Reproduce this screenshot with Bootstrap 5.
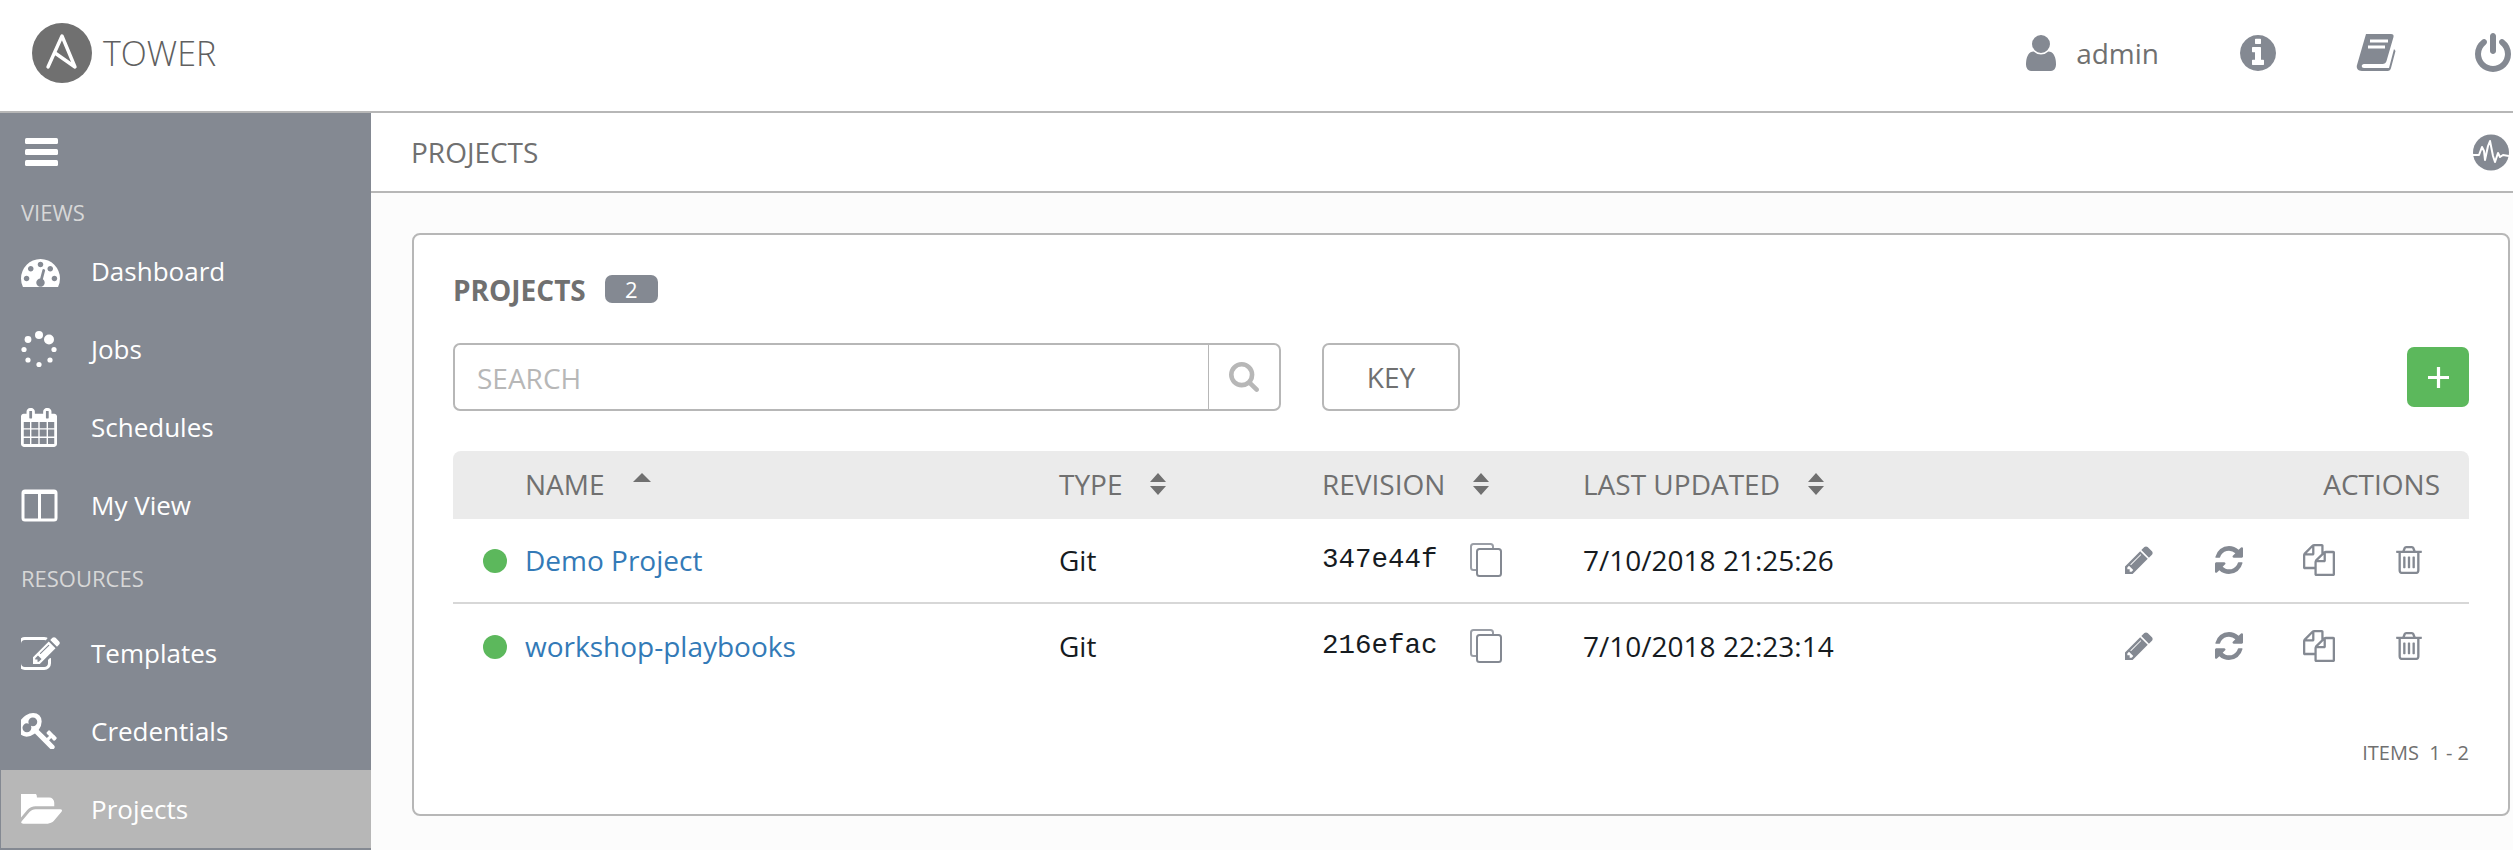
<!DOCTYPE html>
<html lang="en">
<head>
    <meta charset="UTF-8">
    <title>Projects | Tower</title>
    <link rel="stylesheet" href="https://cdn.jsdelivr.net/npm/bootstrap@5.3.0/dist/css/bootstrap.min.css">
    <style>
        html, body { height: 850px; overflow: hidden; }
        body { font-family: "Open Sans", "Liberation Sans", sans-serif; background: #fcfcfc; color: #707070; min-width: 2513px; }
        svg { display: block; flex: none; }
        .icon-sprite { position: absolute; width: 0; height: 0; }

        .top-bar { height: 113px; background: #fff; border-bottom: 2px solid #b7b7b7; padding: 0 2px 6px 32px; flex-wrap: nowrap; }
        .brand-name { font-size: 34px; font-weight: 300; color: #606060; margin-left: 11px; line-height: 1; }
        .user-name { font-size: 28px; color: #707070; margin-left: 20px; margin-right: 81px; line-height: 1; }
        .info-icon { margin-right: 80px; }
        .book-icon { margin-right: 79px; }
        .gray-icon { fill: #848992; }

        .page-body { height: 737px; }
        .side-nav { width: 371px; flex: none; background: #848992; color: #fff; }
        .side-toggle { height: 78px; padding-left: 25px; }
        .side-label { font-size: 22px; color: #d7d7d7; padding-left: 21px; line-height: 41px; height: 41px; padding-top: 1px; }
        .side-label-gap { height: 70px; padding-top: 14px; }
        .side-link { height: 78px; font-size: 26px; font-weight: 500; color: #fff; text-decoration: none; padding-left: 21px; }
        .side-link:hover { color: #fff; }
        .side-link.is-active { background: #b7b7b7; margin-left: 1px; padding-left: 20px; }
        .side-icon { width: 70px; flex: none; fill: #fff; }

        .main-area { min-width: 0; flex: 1 1 auto; }
        .sub-bar { height: 80px; background: #fff; border-bottom: 2px solid #b7b7b7; padding: 0 4px 0 40px; font-size: 28px; }
        .content-area { padding: 40px 3px 0 41px; }
        .proj-card { height: 583px; border: 2px solid #b7b7b7; border-radius: 8px; background: #fff; padding: 40px 39px 0; color: #707070; }
        .proj-title { height: 28px; }
        .proj-title h2 { font-size: 28px; font-weight: 700; color: #707070; margin: 0; line-height: 1; padding-top: 2px; }
        .count-pill { background: #848992; color: #fff; font-size: 22px; font-weight: 500; width: 53px; height: 28px; border-radius: 7px; margin-left: 19px; padding: 0; line-height: 28px; }

        .tool-row { margin-top: 40px; height: 68px; }
        .search-box { width: 828px; height: 68px; flex-wrap: nowrap; }
        .search-box .form-control { border: 2px solid #b7b7b7; border-right: 0; border-radius: 7px 0 0 7px; font-size: 28px; padding: 2px 22px 0; color: #707070; box-shadow: none; }
        .search-box .form-control::placeholder { color: #b7b7b7; opacity: 1; }
        .search-box .input-group-text { width: 73px; background: #fff; justify-content: center; border: 2px solid #b7b7b7; border-left: 1px solid #b7b7b7; border-radius: 0 7px 7px 0; padding: 0; margin-left: 0 !important; fill: #b7b7b7; }
        .key-btn { width: 138px; height: 68px; margin-left: 41px; border: 2px solid #b7b7b7; border-radius: 7px; background: #fff; color: #707070; font-size: 28px; padding: 0; }
        .add-btn { width: 62px; height: 60px; margin-top: 4px; background: #5cb85c; border: 0; border-radius: 7px; padding: 0; }

        .proj-table { margin: 40px 0 0; table-layout: fixed; width: 2016px; font-size: 28px; }
        .proj-table th, .proj-table td { padding: 0 0 2px; border: 0; vertical-align: middle; background: transparent; box-shadow: none; }
        .proj-table thead th { height: 68px; background: #ebebeb; color: #707070; font-size: 28px; font-weight: 400; }
        .proj-table thead th:first-child { border-top-left-radius: 8px; }
        .proj-table thead th:last-child { border-top-right-radius: 8px; text-align: right; padding-right: 29px; }
        .proj-table tbody td { height: 84px; color: #161b1f; }
        .proj-table tbody tr + tr td { border-top: 2px solid #d7d7d7; height: 86px; }
        .proj-table a { color: #337ab7; text-decoration: none; }
        .col-status { width: 72px; }
        .col-name { width: 534px; }
        .col-type { width: 263px; }
        .col-rev { width: 261px; }
        .col-updated { width: 520px; }
        .status-dot { width: 24px; height: 24px; border-radius: 50%; background: #5cb85c; margin: 2px 0 0 30px; }
        .rev-code { font-family: "Liberation Mono", monospace; font-size: 27.500px; width: 148px; }
        .row-actions { padding-left: 22px; fill: #848992; }
        .gap-refresh { margin-left: 62px; }
        .gap-copy { margin-left: 60px; }
        .gap-trash { margin-left: 61px; }
        .sort-mark { margin-left: 28px; fill: #707070; }
        .sort-up { margin-bottom: 14px; }
        .items-note { font-size: 20px; color: #707070; margin: 52px 0 0; text-align: right; line-height: 1.2; }
    </style>
</head>
<body>
    <svg class="icon-sprite" aria-hidden="true">
        <symbol id="i-edit" viewBox="128 128 1536 1536"><path d="M491 1536l91-91-235-235-91 91v107h128v128h107zm523-928q0-22-22-22-10 0-17 7l-542 542q-7 7-7 17 0 22 22 22 10 0 17-7l542-542q7-7 7-17zm-54-192l416 416-832 832h-416v-416zm683 96q0 53-37 90l-166 166-416-416 166-165q36-38 90-38 53 0 91 38l235 234q37 39 37 91z"/></symbol>
        <symbol id="i-refresh" viewBox="128 128 1536 1536"><path d="M1639 1056q0 5-1 7-64 268-268 434.500t-478 166.500q-146 0-282.500-55t-243.500-157l-129 129q-19 19-45 19t-45-19-19-45v-448q0-26 19-45t45-19h448q26 0 45 19t19 45-19 45l-137 137q71 66 161 102t187 36q134 0 250-65t186-179q11-17 53-117 8-23 30-23h192q13 0 22.500 9.500t9.500 22.500zm25-800v448q0 26-19 45t-45 19h-448q-26 0-45-19t-19-45 19-45l138-138q-148-137-349-137-134 0-250 65t-186 179q-11 17-53 117-8 23-30 23h-199q-13 0-22.500-9.500t-9.500-22.500v-7q65-268 270-434.500t480-166.500q146 0 284 55.500t245 156.500l130-129q19-19 45-19t45 19 19 45z"/></symbol>
        <symbol id="i-files" viewBox="0 0 1792 1792"><path d="M1696 384q40 0 68 28t28 68v1216q0 40-28 68t-68 28h-960q-40 0-68-28t-28-68v-288h-544q-40 0-68-28t-28-68v-672q0-40 20-88t48-76l408-408q28-28 76-48t88-20h416q40 0 68 28t28 68v328q68-40 128-40h416zm-544 213l-299 299h299v-299zm-640-384l-299 299h299v-299zm196 647l316-316v-416h-384v416q0 40-28 68t-68 28h-416v640h512v-256q0-40 20-88t48-76zm956 804v-1152h-384v416q0 40-28 68t-68 28h-416v640h896z"/></symbol>
        <symbol id="i-trash" viewBox="192 128 1408 1536"><path d="M704 736v576q0 14-9 23t-23 9h-64q-14 0-23-9t-9-23v-576q0-14 9-23t23-9h64q14 0 23 9t9 23zm256 0v576q0 14-9 23t-23 9h-64q-14 0-23-9t-9-23v-576q0-14 9-23t23-9h64q14 0 23 9t9 23zm256 0v576q0 14-9 23t-23 9h-64q-14 0-23-9t-9-23v-576q0-14 9-23t23-9h64q14 0 23 9t9 23zm128 724v-948h-896v948q0 22 7 40.500t14.500 27 10.500 8.500h832q3 0 10.500-8.500t14.500-27 7-40.500zm-672-1076h448l-48-117q-7-9-17-11h-317q-10 2-17 11zm928 32v64q0 14-9 23t-23 9h-96v948q0 83-47 143.500t-113 60.500h-832q-66 0-113-58.500t-47-141.500v-952h-96q-14 0-23-9t-9-23v-64q0-14 9-23t23-9h309l70-167q15-37 54-63t79-26h320q40 0 79 26t54 63l70 167h309q14 0 23 9t9 23z"/></symbol>
        <symbol id="i-clip" viewBox="0 0 32 34"><path d="M7 27H3.500C2 27 1 26 1 24.500V3.500C1 2 2 1 3.500 1h17C22 1 23 2 23 3.500V6" fill="none" stroke="#9a9ea6" stroke-width="2"/><rect x="7" y="6" width="24" height="27" rx="2.500" fill="none" stroke="#848992" stroke-width="2"/></symbol>
        <symbol id="i-sort" viewBox="0 0 16 22"><path d="M8 0l8 9H0zM8 22l-8-9h16z"/></symbol>
    </svg>

    <nav class="navbar top-bar d-flex justify-content-between align-items-center">
        <div class="d-flex align-items-center">
            <svg width="60" height="60" viewBox="0 0 60 60"><circle cx="30" cy="30" r="30" fill="#707070"/><path d="M16 44 30 13l13 31-20-14" fill="none" stroke="#fff" stroke-width="3.400" stroke-linejoin="round" stroke-linecap="round"/></svg>
            <span class="brand-name">TOWER</span>
        </div>
        <div class="d-flex align-items-center gray-icon">
            <svg width="30" height="36" viewBox="256 128 1280 1536"><path d="M1536 1399q0 109-62.500 187t-150.500 78h-854q-88 0-150.500-78t-62.500-187q0-85 8.500-160.500t31.500-152 58.500-131 94-89 134.500-34.500q131 128 313 128t313-128q76 0 134.500 34.500t94 89 58.500 131 31.500 152 8.500 160.500zm-256-887q0 159-112.500 271.500t-271.500 112.500-271.500-112.500-112.500-271.500 112.500-271.500 271.500-112.500 271.500 112.500 112.500 271.500z"/></svg>
            <span class="user-name">admin</span>
            <svg class="info-icon" width="36" height="36" viewBox="128 128 1536 1536"><path d="M1152 1376v-160q0-14-9-23t-23-9h-96v-512q0-14-9-23t-23-9h-320q-14 0-23 9t-9 23v160q0 14 9 23t23 9h96v320h-96q-14 0-23 9t-9 23v160q0 14 9 23t23 9h448q14 0 23-9t9-23zm-128-896v-160q0-14-9-23t-23-9h-192q-14 0-23 9t-9 23v160q0 14 9 23t23 9h192q14 0 23-9t9-23zm640 416q0 209-103 385.500t-279.500 279.500-385.500 103-385.500-103-279.500-279.500-103-385.500 103-385.500 279.500-279.500 385.500-103 385.500 103 279.500 279.500 103 385.500z"/></svg>
            <svg class="book-icon" width="40" height="37" viewBox="0 0 40 37"><path d="M10 0h25c2 0 3 1 2.500 3l-7 24c-.5 2-2 3-4 3H8c-3 0-3 4 0 4h25l5-19 1.500 2L35 34c-.5 2-1.500 3-3.500 3H6c-4 0-6-3-5-6z"/><path d="M14 7h18M12 13h17" stroke="#fff" stroke-width="3"/></svg>
            <svg width="36" height="39" viewBox="128 0 1536 1664"><path d="M1664 896q0 156-61 298t-164 245-245 164-298 61-298-61-245-164-164-245-61-298q0-182 80.500-343t226.500-270q43-32 95.500-25t83.500 50q32 42 24.500 94.500t-49.500 84.500q-98 74-151.500 181t-53.500 228q0 104 40.500 198.500t109.500 163.500 163.500 109.500 198.500 40.500 198.500-40.500 163.500-109.500 109.500-163.500 40.500-198.500q0-121-53.500-228t-151.500-181q-42-32-49.500-84.500t24.500-94.500q31-43 84-50t95 25q146 109 226.500 270t80.500 343zm-640-768v640q0 52-38 90t-90 38-90-38-38-90v-640q0-52 38-90t90-38 90 38 38 90z"/></svg>
        </div>
    </nav>

    <div class="d-flex page-body">
        <aside class="side-nav d-flex flex-column">
            <div class="side-toggle d-flex align-items-center">
                <svg width="33" height="28" viewBox="0 0 33 28"><rect width="33" height="6" rx="1.500" fill="#fff"/><rect y="11" width="33" height="6" rx="1.500" fill="#fff"/><rect y="22" width="33" height="6" rx="1.500" fill="#fff"/></svg>
            </div>
            <div class="side-label">VIEWS</div>
            <a class="side-link d-flex align-items-center" href="#"><span class="side-icon"><svg width="39" height="31" viewBox="0 128 1792 1408"><path d="M384 1152q0-53-37.500-90.500t-90.500-37.500-90.500 37.500-37.500 90.500 37.500 90.500 90.500 37.500 90.500-37.500 37.500-90.500zm192-448q0-53-37.500-90.500t-90.500-37.500-90.500 37.500-37.500 90.500 37.500 90.500 90.500 37.500 90.500-37.500 37.500-90.500zm428 481l101-382q6-26-7.500-48.500t-38.500-29.500-48 6.500-30 39.500l-101 382q-60 5-107 43.500t-63 98.500q-20 77 20 146t117 89 146-20 89-117q16-60-6-117t-72-91zm660-33q0-53-37.500-90.500t-90.500-37.500-90.500 37.500-37.500 90.500 37.500 90.500 90.500 37.500 90.500-37.500 37.500-90.500zm-640-640q0-53-37.500-90.500t-90.500-37.500-90.500 37.500-37.500 90.500 37.500 90.500 90.500 37.500 90.500-37.500 37.500-90.500zm448 192q0-53-37.500-90.500t-90.500-37.500-90.500 37.500-37.500 90.500 37.500 90.500 90.500 37.500 90.500-37.500 37.500-90.500zm320 448q0 261-141 483-19 29-54 29h-1402q-35 0-54-29-141-221-141-483 0-182 71-348t191-286 286-191 348-71 348 71 286 191 191 286 71 348z"/></svg></span>Dashboard</a>
            <a class="side-link d-flex align-items-center" href="#"><span class="side-icon"><svg width="38" height="38" viewBox="24 328 36 38"><circle cx="41" cy="333" r="4"/><circle cx="51" cy="337.500" r="5"/><circle cx="56" cy="347.500" r="2.600"/><circle cx="52" cy="358" r="2.600"/><circle cx="41" cy="362.500" r="2.600"/><circle cx="30" cy="358" r="2.600"/><circle cx="26" cy="347.500" r="2.600"/><circle cx="30" cy="337.500" r="3.400"/></svg></span>Jobs</a>
            <a class="side-link d-flex align-items-center" href="#"><span class="side-icon"><svg width="36" height="39" viewBox="64 0 1664 1792"><path d="M192 1664h288v-288h-288v288zm352 0h320v-288h-320v288zm-352-352h288v-320h-288v320zm352 0h320v-320h-320v320zm-352-384h288v-288h-288v288zm736 736h320v-288h-320v288zm-384-736h320v-288h-320v288zm768 736h288v-288h-288v288zm-384-352h320v-320h-320v320zm-352-864v-288q0-13-9.500-22.500t-22.500-9.500h-64q-13 0-22.500 9.500t-9.500 22.500v288q0 13 9.500 22.500t22.500 9.500h64q13 0 22.500-9.500t9.500-22.500zm736 864h288v-320h-288v320zm-384-384h320v-288h-320v288zm384 0h288v-288h-288v288zm32-480v-288q0-13-9.500-22.500t-22.500-9.500h-64q-13 0-22.500 9.500t-9.500 22.500v288q0 13 9.500 22.500t22.500 9.500h64q13 0 22.500-9.500t9.500-22.500zm384-64v1280q0 52-38 90t-90 38h-1408q-52 0-90-38t-38-90v-1280q0-52 38-90t90-38h128v-96q0-66 47-113t113-47h64q66 0 113 47t47 113v96h384v-96q0-66 47-113t113-47h64q66 0 113 47t47 113v96h128q52 0 90 38t38 90z"/></svg></span>Schedules</a>
            <a class="side-link d-flex align-items-center" href="#"><span class="side-icon"><svg width="37" height="33" viewBox="0 0 37 33"><rect x="2" y="2" width="33" height="29" rx="2" fill="none" stroke="#fff" stroke-width="3"/><path d="M2 2h33v3H2z"/><path d="M18.500 2v29" stroke="#fff" stroke-width="3"/></svg></span>My View</a>
            <div class="side-label side-label-gap">RESOURCES</div>
            <a class="side-link d-flex align-items-center" href="#"><span class="side-icon"><svg width="39" height="33" viewBox="128 128 1664 1408"><path d="M888 1184l116-116-152-152-116 116v56h96v96h56zm440-720q-16-16-33 1l-350 350q-17 17-1 33t33-1l350-350q17-17 1-33zm80 594v190q0 119-84.500 203.500t-203.500 84.500h-832q-119 0-203.500-84.500t-84.500-203.500v-832q0-119 84.500-203.500t203.500-84.500h832q63 0 117 25 15 7 18 23 3 17-9 29l-49 49q-14 14-32 8-23-6-45-6h-832q-66 0-113 47t-47 113v832q0 66 47 113t113 47h832q66 0 113-47t47-113v-126q0-13 9-22l64-64q15-15 35-7t20 29zm-96-738l288 288-672 672h-288v-288zm444 132l-92 92-288-288 92-92q28-28 68-28t68 28l152 152q28 28 28 68t-28 68z"/></svg></span>Templates</a>
            <a class="side-link d-flex align-items-center" href="#"><span class="side-icon"><svg width="36" height="36" viewBox="128 128 1560 1560"><path d="M832 512q0-80-56-136t-136-56-136 56-56 136q0 42 19 83-41-19-83-19-80 0-136 56t-56 136 56 136 136 56 136-56 56-136q0-42-19-83 41 19 83 19 80 0 136-56t56-136zm851 704q0 17-49 66t-66 49q-9 0-28.500-16t-36.500-33-38.500-40-24.500-26l-96 96 220 220q28 28 28 68 0 42-39 81t-81 39q-40 0-68-28l-671-671q-176 131-365 131-163 0-265.500-102.500t-102.500-265.500q0-160 95-313t248-248 313-95q163 0 265.500 102.500t102.500 265.500q0 189-131 365l355 355 96-96q-3-3-26-24.500t-40-38.500-33-36.500-16-28.500q0-17 49-66t66-49q13 0 23 10 6 6 46 44.500t82 79.500 86.500 86 73 78 28.500 41z"/></svg></span>Credentials</a>
            <a class="side-link is-active d-flex align-items-center" href="#"><span class="side-icon"><svg width="41" height="31" viewBox="0 224 1815 1372"><path d="M1815 952q0 31-31 66l-336 396q-43 51-120.500 86.500t-143.500 35.500h-1088q-34 0-60.500-13t-26.500-43q0-31 31-66l336-396q43-51 120.500-86.500t143.500-35.500h1088q34 0 60.500 13t26.500 43zm-343-344v160h-832q-94 0-197 47.500t-164 119.500l-337 396-5 6q0-4-.5-12.500t-.5-12.500v-960q0-92 66-158t158-66h320q92 0 158 66t66 158v32h544q92 0 158 66t66 158z"/></svg></span>Projects</a>
        </aside>

        <main class="main-area">
            <div class="sub-bar d-flex justify-content-between align-items-center">
                <span>PROJECTS</span>
                <svg width="36" height="37" viewBox="0 0 36 37"><circle cx="18" cy="18.500" r="18" fill="#848992"/><path d="M0 21h6l3-8 2 4 1 9 3-14 2-5 3 15 2 6 3-9 2 4 3-2 6 1" fill="none" stroke="#fff" stroke-width="2" stroke-linejoin="round"/></svg>
            </div>
            <div class="content-area">
                <section class="proj-card">
                    <div class="proj-title d-flex align-items-center">
                        <h2>PROJECTS</h2>
                        <span class="badge count-pill">2</span>
                    </div>
                    <div class="tool-row d-flex align-items-start">
                        <div class="input-group search-box">
                            <input class="form-control" type="text" placeholder="SEARCH">
                            <span class="input-group-text"><svg width="30" height="30" viewBox="64 128 1664 1664"><path d="M1216 832q0-185-131.500-316.500t-316.500-131.500-316.500 131.500-131.500 316.500 131.500 316.500 316.500 131.500 316.500-131.500 131.500-316.500zm512 832q0 52-38 90t-90 38q-54 0-90-38l-343-342q-179 124-399 124-143 0-273.500-55.500t-225-150-150-225-55.500-273.500 55.500-273.500 150-225 225-150 273.500-55.500 273.500 55.500 225 150 150 225 55.500 273.500q0 220-124 399l343 343q37 37 37 90z"/></svg></span>
                        </div>
                        <button class="btn key-btn" type="button">KEY</button>
                        <button class="btn add-btn d-flex align-items-center justify-content-center ms-auto" type="button"><svg width="21" height="21" viewBox="0 0 21 21"><path d="M10.500 0v21M0 10.500h21" stroke="#fff" stroke-width="3.200"/></svg></button>
                    </div>

                    <table class="table proj-table">
                        <colgroup><col class="col-status"><col class="col-name"><col class="col-type"><col class="col-rev"><col class="col-updated"><col></colgroup>
                        <thead>
                            <tr>
                                <th></th>
                                <th><span class="d-flex align-items-center">NAME<svg class="sort-mark sort-up" width="18" height="9" viewBox="0 0 18 9"><path d="M9 0l9 9H0z"/></svg></span></th>
                                <th><span class="d-flex align-items-center">TYPE<svg class="sort-mark" width="16" height="22"><use href="#i-sort"/></svg></span></th>
                                <th><span class="d-flex align-items-center">REVISION<svg class="sort-mark" width="16" height="22"><use href="#i-sort"/></svg></span></th>
                                <th><span class="d-flex align-items-center">LAST UPDATED<svg class="sort-mark" width="16" height="22"><use href="#i-sort"/></svg></span></th>
                                <th>ACTIONS</th>
                            </tr>
                        </thead>
                        <tbody>
                            <tr>
                                <td><div class="status-dot"></div></td>
                                <td><a href="#">Demo Project</a></td>
                                <td>Git</td>
                                <td><div class="d-flex align-items-center"><span class="rev-code">347e44f</span><svg width="32" height="34"><use href="#i-clip"/></svg></div></td>
                                <td>7/10/2018 21:25:26</td>
                                <td><div class="d-flex align-items-center row-actions">
                                    <svg width="28" height="28"><use href="#i-edit"/></svg>
                                    <svg class="gap-refresh" width="28" height="28"><use href="#i-refresh"/></svg>
                                    <svg class="gap-copy" width="32" height="32"><use href="#i-files"/></svg>
                                    <svg class="gap-trash" width="26" height="28"><use href="#i-trash"/></svg>
                                </div></td>
                            </tr>
                            <tr>
                                <td><div class="status-dot"></div></td>
                                <td><a href="#">workshop-playbooks</a></td>
                                <td>Git</td>
                                <td><div class="d-flex align-items-center"><span class="rev-code">216efac</span><svg width="32" height="34"><use href="#i-clip"/></svg></div></td>
                                <td>7/10/2018 22:23:14</td>
                                <td><div class="d-flex align-items-center row-actions">
                                    <svg width="28" height="28"><use href="#i-edit"/></svg>
                                    <svg class="gap-refresh" width="28" height="28"><use href="#i-refresh"/></svg>
                                    <svg class="gap-copy" width="32" height="32"><use href="#i-files"/></svg>
                                    <svg class="gap-trash" width="26" height="28"><use href="#i-trash"/></svg>
                                </div></td>
                            </tr>
                        </tbody>
                    </table>
                    <p class="items-note">ITEMS&nbsp; 1 - 2</p>
                </section>
            </div>
        </main>
    </div>
    <script src="https://cdn.jsdelivr.net/npm/bootstrap@5.3.0/dist/js/bootstrap.bundle.min.js"></script>
</body>
</html>
